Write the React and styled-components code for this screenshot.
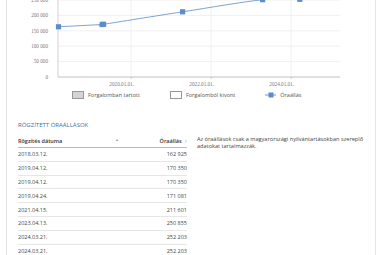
import React from "react";
import styled, { createGlobalStyle } from "styled-components";

const points = [
  { x: 58.5, y: 26.8 },
  { x: 102.2, y: 24.5 },
  { x: 103.6, y: 24.3 },
  { x: 182.6, y: 11.8 },
  { x: 262.6, y: -0.3 },
  { x: 299.8, y: -0.7 },
];

const rows = [
  ["2018.03.12.", "162 925"],
  ["2019.04.12.", "170 350"],
  ["2019.04.12.", "170 350"],
  ["2019.04.24.", "171 081"],
  ["2021.04.15.", "211 601"],
  ["2023.04.13.", "250 855"],
  ["2024.03.21.", "252 203"],
  ["2024.03.21.", "252 203"],
];

const yTicks = [
  ["250 000", 0],
  ["200 000", 15.4],
  ["150 000", 30.8],
  ["100 000", 46.2],
  ["50 000", 61.6],
  ["0", 77],
];

const xTicks = [
  ["2020.01.01.", 131],
  ["2022.01.01.", 211],
  ["2024.01.01.", 291],
];

// simple catmull-rom -> bezier smoothing
function smoothPath(pts) {
  let d = `M${pts[0].x},${pts[0].y}`;
  for (let i = 0; i < pts.length - 1; i++) {
    const p0 = pts[i - 1] || pts[i];
    const p1 = pts[i];
    const p2 = pts[i + 1];
    const p3 = pts[i + 2] || p2;
    const c1x = p1.x + (p2.x - p0.x) / 6;
    const c1y = p1.y + (p2.y - p0.y) / 6;
    const c2x = p2.x - (p3.x - p1.x) / 6;
    const c2y = p2.y - (p3.y - p1.y) / 6;
    d += ` C${c1x},${c1y} ${c2x},${c2y} ${p2.x},${p2.y}`;
  }
  return d;
}

export default function App() {
  return (
    <>
      <GlobalStyle />
      <Card>
        <Chart viewBox="7 0 368 88" width="368" height="88">
          {yTicks.map(([label, y]) => (
            <g key={label}>
              <line x1="58" x2="340" y1={y} y2={y} stroke="#ececec" strokeWidth="0.8" />
              <text x="48" y={y + 1.8} textAnchor="end" fontSize="5.2" fill="#777" fontFamily="Liberation Serif, serif">
                {label}
              </text>
            </g>
          ))}
          {xTicks.map(([label, x]) => (
            <g key={label}>
              <line x1={x} x2={x} y1="0" y2="77" stroke="#ececec" strokeWidth="0.8" />
              <line x1={x} x2={x} y1="77" y2="79" stroke="#bbb" strokeWidth="0.8" />
              <text x={x + 3} y="85.5" textAnchor="end" fontSize="5.2" fill="#777" fontFamily="Liberation Serif, serif">
                {label}
              </text>
            </g>
          ))}
          <line x1="58" x2="58" y1="0" y2="77" stroke="#c8c8c8" strokeWidth="0.8" />
          <line x1="58" x2="340" y1="77" y2="77" stroke="#bdbdbd" strokeWidth="0.8" />
          <path d={smoothPath(points)} fill="none" stroke="#7ba3d2" strokeWidth="1" />
          {points.map((p, i) => (
            <rect key={i} x={p.x - 2.6} y={p.y - 2.6} width="5.2" height="5.2" fill="#5b8dc9" />
          ))}
        </Chart>

        <Legend>
          <LegendItem>
            <Swatch $fill="#d4d4d4" />
            Forgalomban tartott
          </LegendItem>
          <LegendItem>
            <Swatch $fill="#ffffff" />
            Forgalomból kivont
          </LegendItem>
          <LegendItem>
            <svg width="11" height="6" viewBox="0 0 11 6">
              <line x1="0" x2="11" y1="3" y2="3" stroke="#6f9bd0" strokeWidth="1" />
              <rect x="3.5" y="0.5" width="5" height="5" fill="#5b8dc9" />
            </svg>
            Óraállás
          </LegendItem>
        </Legend>

        <Section>
          <Title>RÖGZÍTETT ÓRAÁLLÁSOK</Title>
          <Columns>
            <Table>
              <thead>
                <tr>
                  <Th>
                    <HeadInner>
                      Rögzítés dátuma
                      <SortMark>▲</SortMark>
                    </HeadInner>
                  </Th>
                  <Th $right>
                    Óraállás <SortMark $light>⇕</SortMark>
                  </Th>
                </tr>
              </thead>
              <tbody>
                {rows.map(([date, value], i) => (
                  <tr key={i}>
                    <Td>{date}</Td>
                    <Td $right>{value}</Td>
                  </tr>
                ))}
              </tbody>
            </Table>
            <Note>
              Az óraállások csak a magyarországi nyilvántartásokban szereplő
              adatokat tartalmazzák.
            </Note>
          </Columns>
        </Section>
      </Card>
    </>
  );
}

const GlobalStyle = createGlobalStyle`
  body {
    margin: 0;
    background: #fff;
    font-family: "Open Sans", "Liberation Sans", sans-serif;
  }
`;

const Card = styled.div`
  margin-left: 6px;
  width: 368px;
  height: 270px;
  border-left: 1px solid #e4e4e4;
  border-right: 1px solid #e4e4e4;
  overflow: hidden;
`;

const Chart = styled.svg`
  display: block;
  overflow: hidden;
`;

const Legend = styled.div`
  display: flex;
  align-items: center;
  height: 14px;
  padding-left: 65px;
  gap: 30px;
  font-size: 5.5px;
  color: #555;
`;

const LegendItem = styled.div`
  display: flex;
  align-items: center;
  gap: 4px;
`;

const Swatch = styled.span`
  display: inline-block;
  width: 10px;
  height: 6px;
  border: 0.8px solid #999;
  background: ${(p) => p.$fill};
`;

const Section = styled.div`
  padding: 19px 0 0 11px;
`;

const Title = styled.div`
  font-size: 6px;
  color: #40709f;
  height: 13px;
  line-height: 8px;
`;

const Columns = styled.div`
  display: flex;
  align-items: flex-start;
  gap: 10px;
`;

const Table = styled.table`
  width: 169px;
  border-collapse: collapse;
  font-size: 5.5px;
  color: #444;
`;

const Th = styled.th`
  height: 13px;
  padding: 0;
  font-weight: 600;
  color: #333;
  text-align: ${(p) => (p.$right ? "right" : "left")};
  border-bottom: 0.8px solid #bbb;
  white-space: nowrap;
`;

const HeadInner = styled.div`
  display: flex;
  justify-content: space-between;
  padding-right: 20px;
`;

const SortMark = styled.span`
  font-weight: 400;
  font-size: 4px;
  color: ${(p) => (p.$light ? "#c4c4c4" : "#9aa")};
  margin-left: 1px;
`;

const Td = styled.td`
  height: 12.8px;
  padding: 0;
  text-align: ${(p) => (p.$right ? "right" : "left")};
  border-bottom: 0.8px solid #e6e6e6;
`;

const Note = styled.p`
  margin: 0;
  width: 172px;
  font-size: 5.6px;
  line-height: 7px;
  color: #444;
  padding-top: 2px;
`;
